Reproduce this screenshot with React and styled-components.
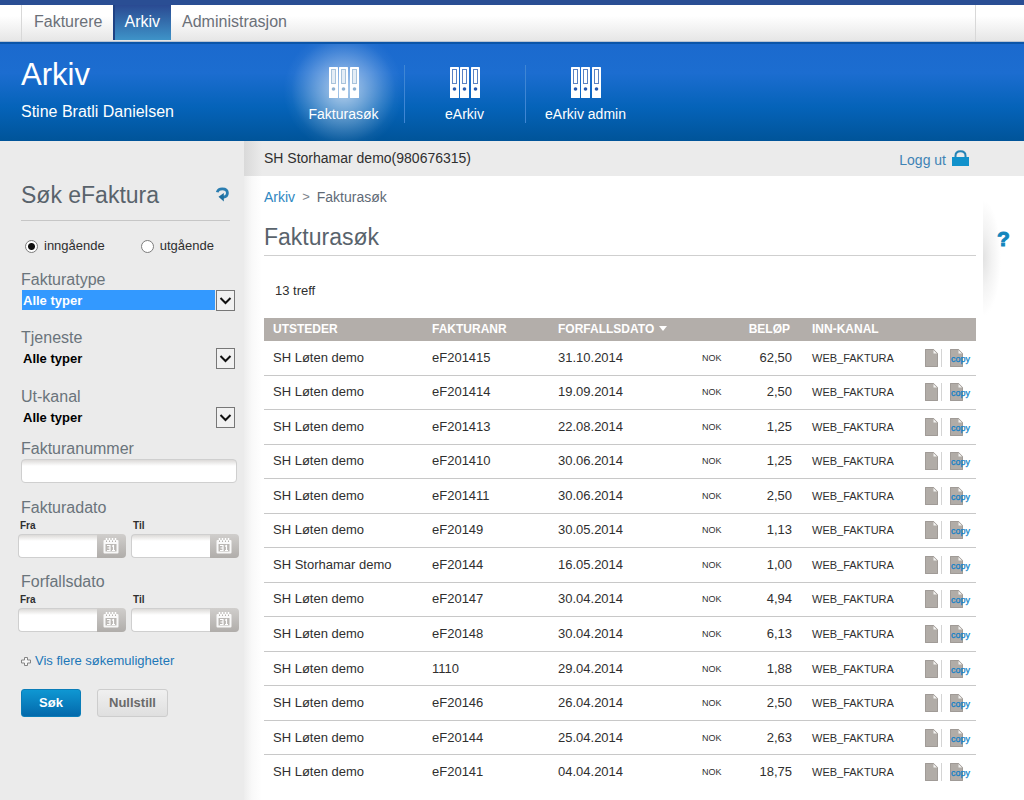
import React from 'react';
import styled, { createGlobalStyle } from 'styled-components';

const GlobalStyle = createGlobalStyle`
  *, *::before, *::after { box-sizing: border-box; }
  body {
    margin: 0;
    background: #fff;
    color: #2f2f2f;
    font: 13px/20px "Liberation Sans", Arial, sans-serif;
  }
  input, select, button { font-family: inherit; }
  a { text-decoration: none; }
`;

const Page = styled.div`
  display: flex;
  flex-direction: column;
  min-height: 100vh;
`;

const TopNav = styled.nav`
  display: flex;
  height: 42px;
  padding: 0 48px 0 21px;
  border-top: 5px solid #2a4e94;
  border-bottom: 1px solid #b9c4d2;
  background: linear-gradient(#fff 30%, #e6e6e6);
`;

const Tabs = styled.div`
  display: flex;
  flex: 1;
  padding-left: 1px;
  border-left: 1px solid #d8d8d8;
  border-right: 1px solid #d8d8d8;
`;

const Tab = styled.a`
  padding: 0 11px;
  font-size: 16px;
  line-height: 34px;
  color: ${(p) => (p.$active ? '#fff' : '#6b7078')};
  background: ${(p) => (p.$active ? 'linear-gradient(#2a4a92, #3e93c8)' : 'none')};
  box-shadow: ${(p) => (p.$active ? 'inset 2px 0 #1f4284' : 'none')};
  height: 35px;
`;

const Banner = styled.header`
  display: flex;
  height: 99px;
  color: #fff;
  border-top: 2px solid #0b55a8;
  background: linear-gradient(#1b6ace, #1c6dd0 30%, #0563b9 65%, #005499);
`;

const BannerTitle = styled.div`
  width: 283px;
  padding: 12px 0 0 21px;
`;

const BannerHeading = styled.h1`
  margin: 0;
  font-size: 31px;
  line-height: 38px;
  font-weight: 400;
`;

const BannerUser = styled.p`
  margin: 8px 0 0;
  font-size: 16px;
  line-height: 20px;
`;

const BannerNav = styled.nav`
  display: flex;
`;

const BannerLink = styled.a`
  display: flex;
  flex-direction: column;
  align-items: center;
  gap: 6px;
  width: 121px;
  padding-top: 23px;
  color: #fff;
  font-size: 14px;
  line-height: 20px;
  background: ${(p) =>
    p.$active
      ? 'radial-gradient(circle at 50% 48%, rgba(255,255,255,.68), rgba(255,255,255,.44) 20px, rgba(255,255,255,.18) 40px, rgba(255,255,255,.04) 52px, rgba(255,255,255,0) 60px)'
      : 'none'};
`;

const BannerRule = styled.span`
  width: 1px;
  height: 58px;
  margin: 21px -1px 0 0;
  background: #3f86d4;
  &:first-child { background: none; }
`;

const Body = styled.div`
  display: flex;
  flex: 1;
`;

const Sidebar = styled.form`
  width: 244px;
  flex: none;
  padding: 40px 5px 24px 18px;
  background: #ebebeb;
`;

const SidebarHead = styled.div`
  display: flex;
  justify-content: space-between;
  align-items: center;
  height: 40px;
  margin: 0 9px 0 3px;
  padding-bottom: 12px;
  border-bottom: 1px solid #c6c6c6;
`;

const Heading = styled.h2`
  margin: 0;
  font-size: 23px;
  line-height: 28px;
  font-weight: 400;
  color: #59636c;
`;

const ResetIcon = styled.button`
  display: flex;
  border: 0;
  padding: 0;
  background: none;
`;

const Radios = styled.div`
  display: flex;
  gap: 36px;
  margin: 15px 0 14px 7px;
`;

const RadioLabel = styled.label`
  display: flex;
  align-items: center;
  gap: 6px;
`;

const Radio = styled.input`
  appearance: none;
  width: 13px;
  height: 13px;
  margin: 0;
  border: 1px solid #7c7c7c;
  border-radius: 50%;
  background: #fff;
  &:checked { background: radial-gradient(circle, #111 3px, #fff 4px); }
`;

const Field = styled.div`
  margin: 0 2px ${(p) => p.$gap}px 3px;
`;

const Label = styled.label`
  display: block;
  font-size: 16px;
  line-height: 20px;
  color: #6a747b;
`;

const SelectBox = styled.div`
  position: relative;
  height: 22px;
  margin: 0 2px 0 1px;
`;

const Select = styled.select`
  appearance: none;
  display: block;
  width: calc(100% - 20px);
  height: 20px;
  border: 0;
  border-radius: 0;
  padding: 0 1px;
  outline: 0;
  font-size: 13px;
  font-weight: 700;
  color: ${(p) => (p.$selected ? '#fff' : '#000')};
  background: ${(p) => (p.$selected ? '#3399ff' : 'transparent')};
`;

const Chevron = styled.svg`
  position: absolute;
  top: 0;
  right: 0;
  pointer-events: none;
`;

const TextInput = styled.input`
  display: block;
  width: 100%;
  min-width: 0;
  height: 24px;
  border: 1px solid #cfcfcf;
  border-radius: ${(p) => (p.$joined ? '4px 0 0 4px' : '4px')};
  border-right-width: ${(p) => (p.$joined ? 0 : '1px')};
  padding: 0 6px;
  font-size: 13px;
  background: linear-gradient(#dcdad8, #fff 6px);
`;

const DateGroup = styled.fieldset`
  border: 0;
  padding: 0;
  margin: 0 0 ${(p) => p.$gap}px;
`;

const DateLegend = styled.legend`
  padding: 0 3px;
  font-size: 16px;
  line-height: 20px;
  color: #6a747b;
`;

const DateRow = styled.div`
  display: flex;
  gap: 5px;
`;

const DateField = styled.div`
  flex: 1;
`;

const SmallLabel = styled.label`
  display: block;
  padding-left: 2px;
  font-size: 10px;
  line-height: 16px;
  font-weight: 700;
`;

const DateBox = styled.div`
  display: flex;
`;

const CalendarButton = styled.button`
  display: flex;
  align-items: center;
  justify-content: center;
  flex: none;
  width: 29px;
  height: 24px;
  border: 0;
  border-radius: 0 4px 4px 0;
  padding: 0 2px 2px 0;
  background: linear-gradient(#d0cecc, #b0adaa);
`;

const MoreLink = styled.a`
  display: flex;
  align-items: center;
  gap: 4px;
  margin-left: 3px;
  color: #1c77b8;
`;

const Buttons = styled.div`
  display: flex;
  gap: 16px;
  margin: 18px 3px 0;
`;

const Button = styled.button`
  width: ${(p) => (p.$primary ? 60 : 71)}px;
  height: 28px;
  padding: 0 0 2px;
  border: 1px solid ${(p) => (p.$primary ? '#0a7db8' : '#cdcdcd')};
  border-radius: 3px;
  font-size: 13px;
  font-weight: 700;
  color: ${(p) => (p.$primary ? '#fff' : '#6a6a6a')};
  background: ${(p) => (p.$primary ? 'linear-gradient(#0f97d2, #0369ab)' : 'linear-gradient(#f0f0f0, #dfdfdf)')};
`;

const Main = styled.main`
  flex: 1;
  min-width: 0;
  background: linear-gradient(90deg, #ededed, #f9f9f9 8px, #fff 18px);
`;

const StatusBar = styled.div`
  display: flex;
  justify-content: space-between;
  height: 35px;
  padding: 7px 55px 0 20px;
  font-size: 14px;
  background: linear-gradient(90deg, #d9d9d9, #ebebeb 18px);
`;

const Logout = styled.a`
  display: flex;
  gap: 6px;
  padding-top: 2px;
  color: #3f83b5;
`;

const Columns = styled.div`
  display: flex;
`;

const Content = styled.div`
  flex: 1;
  min-width: 0;
  padding: 11px 7px 0 20px;
`;

const Crumbs = styled.nav`
  display: flex;
  gap: 7px;
  font-size: 14px;
  line-height: 20px;
  color: #5f6a76;
`;

const CrumbLink = styled.a`
  color: #2e86c1;
`;

const CrumbSep = styled.span`
  font-size: 13px;
  color: #7c838a;
`;

const PageHeading = styled(Heading)`
  padding: 16px 0 4px;
  line-height: 28px;
  border-bottom: 1px solid #cfcfcf;
`;

const Hits = styled.p`
  margin: 25px 11px 17px;
`;

const Table = styled.table`
  width: 100%;
  height: 472px;
  table-layout: fixed;
  border-collapse: separate;
  border-spacing: 0;
`;

const Col = styled.col`
  width: ${(p) => p.$w}px;
`;

const Th = styled.th`
  height: 23px;
  padding: 0 ${(p) => (p.$right ? 13 : 0)}px 0 9px;
  text-align: ${(p) => (p.$right ? 'right' : 'left')};
  font-size: 12px;
  line-height: 23px;
  white-space: nowrap;
  color: #fff;
  background: #b3aeaa;
`;

const SortArrow = styled.svg`
  margin-left: 5px;
  vertical-align: 2px;
`;

const Td = styled.td`
  padding: 0 ${(p) => (p.$right ? 11 : 0)}px 0 9px;
  border-bottom: 1px solid #c8c8c8;
  text-align: ${(p) => (p.$right ? 'right' : 'left')};
  font-size: ${(p) => p.$size || 13}px;
  line-height: 20px;
  white-space: nowrap;
  tr:last-child > & { border-bottom-color: transparent; }
`;

const RowActions = styled.div`
  display: flex;
  align-items: center;
`;

const IconButton = styled.button`
  display: flex;
  border: 0;
  padding: 0;
  background: none;
  & + & {
    margin-left: 3px;
    padding-left: 8px;
    border-left: 1px solid #d4d4d4;
  }
`;

const HelpRail = styled.aside`
  width: 41px;
  height: 116px;
  margin-top: 24px;
  padding: 29px 0 0 14px;
  background: radial-gradient(ellipse 18px 58px at 0 50%, #e2e2e2, #f3f3f3 50%, #fff);
`;

const HelpLink = styled.a`
  font-size: 21px;
  line-height: 20px;
  font-weight: 700;
  color: #1286bd;
  -webkit-text-stroke: 1px #1286bd;
`;

const Binders = ({ hole, opening }) => (
  <svg width="30" height="31" viewBox="0 0 30 31" aria-hidden="true">
    {[0, 10, 21].map((x) => (
      <g key={x} transform={`translate(${x} 0)`}>
        <rect width="9" height="31" rx=".6" fill="#fff" />
        <rect x="2.5" y="2.5" width="4" height="14" fill={opening} stroke={hole} strokeOpacity=".75" />
        <circle cx="4.500" cy="22" r="1.800" fill={hole} />
      </g>
    ))}
  </svg>
);

const Lock = () => (
  <svg width="17" height="17" viewBox="0 0 17 17" aria-hidden="true">
    <path d="M3.500 7.500V5.800C3.500 2.800 5.500 1.300 8.500 1.300S13.500 2.800 13.500 5.800V7.500" fill="none" stroke="#2583b5" strokeWidth="2" />
    <rect y="7" width="17" height="9" fill="#1191cb" />
  </svg>
);

const Refresh = () => (
  <svg width="14" height="15" viewBox="0 0 14 15" aria-hidden="true">
    <path d="M1.300 5.300C1.800 3 3.800 1.800 6.300 1.800C9.500 1.800 11.400 3.500 11.400 6C11.400 8.500 9.300 10 7 10.300" fill="none" stroke="#2a7db0" strokeWidth="2.800" />
    <path d="M2.500 9.800L7.800 6V14.500Z" fill="#1f6f9f" />
  </svg>
);

const Calendar = () => (
  <svg width="16" height="17" viewBox="0 0 16 17" aria-hidden="true">
    <rect x=".5" y="3" width="15" height="13.500" rx="1" fill="#fff" fillOpacity=".9" />
    <path d="M3.500 4V1M6.500 4V1M9.500 4V1M12.500 4V1" stroke="#fff" strokeWidth="1.500" />
    <path d="M3.500 3.500v1.500M6.500 3.500v1.500M9.500 3.500v1.500M12.500 3.500v1.500" stroke="#b5b2af" />
    <rect x="2.500" y="7" width="11" height="7.500" fill="#bab7b4" />
    <path d="M4 8.500H7V13.500H4M4.500 11H7M9 9.300L10.500 8.500V13.500M9 13.500H12" fill="none" stroke="#fff" strokeWidth="1.200" />
  </svg>
);

const Plus = () => (
  <svg width="10" height="11" viewBox="0 0 10 11" aria-hidden="true">
    <path d="M3.500 1.500H6.500V4H9.500V7H6.500V9.500H3.500V7H.5V4H3.500Z" fill="#f6f6f6" stroke="#858585" />
  </svg>
);

const DocShape = () => (
  <>
    <path d="M0 0H8.500L13 4.500V18H0Z" fill="#b1aca7" />
    <path d="M.5 17.500V.5H8.300L12.500 4.700V17.500Z" fill="none" stroke="#a09b97" />
    <path d="M8.500 1V4.500H12Z" fill="#f4f3f2" />
  </>
);

const Doc = () => (
  <svg width="13" height="18" viewBox="0 0 13 18" aria-hidden="true">
    <DocShape />
  </svg>
);

const DocCopy = () => (
  <svg width="22" height="18" viewBox="0 0 22 18">
    <DocShape />
    <text x="1" y="13" fontSize="9" fill="#0f7fc8" stroke="#0f7fc8" strokeWidth=".25">copy</text>
  </svg>
);

const SelectField = ({ id, label, selected, gap }) => (
  <Field $gap={gap}>
    <Label htmlFor={id}>{label}</Label>
    <SelectBox>
      <Select id={id} $selected={selected}>
        <option>Alle typer</option>
      </Select>
      <Chevron width="19" height="22" viewBox="0 0 19 22" aria-hidden="true">
        <rect x=".5" y=".5" width="18" height="20" fill="#f1f1f1" stroke="#777" />
        <path d="M4.500 8L9.500 13L14.500 8" fill="none" stroke="#111" strokeWidth="2" />
      </Chevron>
    </SelectBox>
  </Field>
);

const DateRange = ({ id, label, gap }) => (
  <DateGroup $gap={gap}>
    <DateLegend>{label}</DateLegend>
    <DateRow>
      {['Fra', 'Til'].map((end) => (
        <DateField key={end}>
          <SmallLabel htmlFor={id + end}>{end}</SmallLabel>
          <DateBox>
            <TextInput id={id + end} type="text" $joined />
            <CalendarButton type="button" aria-label={`${label} ${end}`}>
              <Calendar />
            </CalendarButton>
          </DateBox>
        </DateField>
      ))}
    </DateRow>
  </DateGroup>
);

const rows = [
  ['SH Løten demo', 'eF201415', '31.10.2014', '62,50'],
  ['SH Løten demo', 'eF201414', '19.09.2014', '2,50'],
  ['SH Løten demo', 'eF201413', '22.08.2014', '1,25'],
  ['SH Løten demo', 'eF201410', '30.06.2014', '1,25'],
  ['SH Løten demo', 'eF201411', '30.06.2014', '2,50'],
  ['SH Løten demo', 'eF20149', '30.05.2014', '1,13'],
  ['SH Storhamar demo', 'eF20144', '16.05.2014', '1,00'],
  ['SH Løten demo', 'eF20147', '30.04.2014', '4,94'],
  ['SH Løten demo', 'eF20148', '30.04.2014', '6,13'],
  ['SH Løten demo', '1110', '29.04.2014', '1,88'],
  ['SH Løten demo', 'eF20146', '26.04.2014', '2,50'],
  ['SH Løten demo', 'eF20144', '25.04.2014', '2,63'],
  ['SH Løten demo', 'eF20141', '04.04.2014', '18,75'],
];

export default function App() {
  return (
    <Page>
      <GlobalStyle />
      <TopNav>
        <Tabs>
          <Tab href="#">Fakturere</Tab>
          <Tab href="#" $active>Arkiv</Tab>
          <Tab href="#">Administrasjon</Tab>
        </Tabs>
      </TopNav>
      <Banner>
        <BannerTitle>
          <BannerHeading>Arkiv</BannerHeading>
          <BannerUser>Stine Bratli Danielsen</BannerUser>
        </BannerTitle>
        <BannerNav>
          {['Fakturasøk', 'eArkiv', 'eArkiv admin'].map((name, i) => (
            <React.Fragment key={name}>
              <BannerRule />
              <BannerLink href="#" $active={i === 0}>
                <Binders hole={i === 0 ? '#8fb1d2' : '#2458b0'} opening={i === 0 ? '#e4edf6' : '#fff'} />
                {name}
              </BannerLink>
            </React.Fragment>
          ))}
        </BannerNav>
      </Banner>
      <Body>
        <Sidebar>
          <SidebarHead>
            <Heading>Søk eFaktura</Heading>
            <ResetIcon type="button" aria-label="Oppdater">
              <Refresh />
            </ResetIcon>
          </SidebarHead>
          <Radios>
            <RadioLabel>
              <Radio type="radio" name="retning" defaultChecked />
              inngående
            </RadioLabel>
            <RadioLabel>
              <Radio type="radio" name="retning" />
              utgående
            </RadioLabel>
          </Radios>
          <SelectField id="fakturatype" label="Fakturatype" selected gap={16} />
          <SelectField id="tjeneste" label="Tjeneste" gap={17} />
          <SelectField id="utkanal" label="Ut-kanal" gap={10} />
          <Field $gap={15}>
            <Label htmlFor="fakturanummer">Fakturanummer</Label>
            <TextInput id="fakturanummer" type="text" />
          </Field>
          <DateRange id="fakturadato" label="Fakturadato" gap={14} />
          <DateRange id="forfallsdato" label="Forfallsdato" gap={19} />
          <MoreLink href="#">
            <Plus />
            Vis flere søkemuligheter
          </MoreLink>
          <Buttons>
            <Button type="button" $primary>Søk</Button>
            <Button type="reset">Nullstill</Button>
          </Buttons>
        </Sidebar>
        <Main>
          <StatusBar>
            <span>SH Storhamar demo(980676315)</span>
            <Logout href="#">
              Logg ut
              <Lock />
            </Logout>
          </StatusBar>
          <Columns>
            <Content>
              <Crumbs>
                <CrumbLink href="#">Arkiv</CrumbLink>
                <CrumbSep>&gt;</CrumbSep>
                <span>Fakturasøk</span>
              </Crumbs>
              <PageHeading>Fakturasøk</PageHeading>
              <Hits>13 treff</Hits>
              <Table>
                <colgroup>
                  {[159, 126, 144, 38, 72, 113, 60].map((w, i) => (
                    <Col key={i} $w={w} />
                  ))}
                </colgroup>
                <thead>
                  <tr>
                    <Th>UTSTEDER</Th>
                    <Th>FAKTURANR</Th>
                    <Th>
                      FORFALLSDATO
                      <SortArrow width="8" height="5" viewBox="0 0 8 5" aria-hidden="true">
                        <path d="M0 0H8L4 5Z" fill="#fff" />
                      </SortArrow>
                    </Th>
                    <Th />
                    <Th $right>BELØP</Th>
                    <Th>INN-KANAL</Th>
                    <Th />
                  </tr>
                </thead>
                <tbody>
                  {rows.map(([issuer, number, due, amount], i) => (
                    <tr key={i}>
                      <Td>{issuer}</Td>
                      <Td>{number}</Td>
                      <Td>{due}</Td>
                      <Td $size={9}>NOK</Td>
                      <Td $right>{amount}</Td>
                      <Td $size={11}>WEB_FAKTURA</Td>
                      <Td>
                        <RowActions>
                          <IconButton type="button" aria-label="Vis faktura"><Doc /></IconButton>
                          <IconButton type="button"><DocCopy /></IconButton>
                        </RowActions>
                      </Td>
                    </tr>
                  ))}
                </tbody>
              </Table>
            </Content>
            <HelpRail>
              <HelpLink href="#">?</HelpLink>
            </HelpRail>
          </Columns>
        </Main>
      </Body>
    </Page>
  );
}
